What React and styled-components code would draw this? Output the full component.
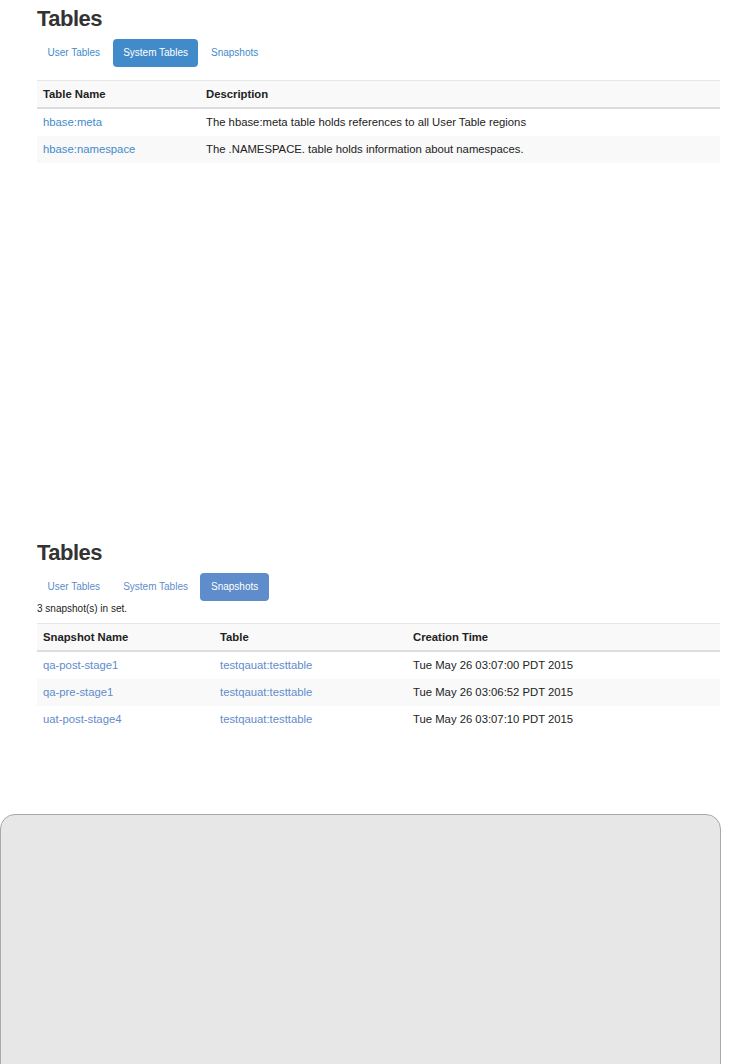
import React from "react";
import styled, { createGlobalStyle } from "styled-components";

const Global = createGlobalStyle`
  html, body { margin: 0; padding: 0; background: #fff; }
  body {
    font-family: "Liberation Sans", Arial, Helvetica, sans-serif;
    color: #333;
    font-size: 11px;
  }
`;

const Page = styled.div`
  display: flex;
  flex-direction: column;
`;

const Section = styled.section`
  padding: 6px 19px 0 37px;
  margin-top: ${(p) => p.$top || 0}px;
`;

const Heading = styled.h1`
  margin: 0;
  font-size: 22px;
  line-height: 26px;
  font-weight: bold;
  letter-spacing: -0.5px;
  color: #333;
`;

const Tabs = styled.ul`
  list-style: none;
  margin: 7px 0 0 0;
  padding: 0;
  display: flex;
  gap: 2px;
`;

const Tab = styled.li`
  height: 28px;
  line-height: 28px;
  padding: 0 10.5px;
  border-radius: 4px;
  font-size: 10px;
  color: ${(p) => (p.$active ? "#fff" : p.$accent)};
  background: ${(p) => (p.$active ? p.$accent : "transparent")};
  cursor: pointer;
`;

const Note = styled.div`
  font-size: 10px;
  line-height: 16px;
  color: #222;
`;

const Table = styled.table`
  width: 100%;
  border-collapse: collapse;
  margin-top: ${(p) => p.$gap}px;
  border-top: 1px solid #e6e6e6;
  table-layout: fixed;
`;

const Th = styled.th`
  text-align: left;
  font-weight: bold;
  font-size: 11.3px;
  line-height: 14px;
  padding: 6px 6px;
  background: #f9f9f9;
  border-bottom: 2px solid #dddddd;
  color: #222;
  width: ${(p) => (p.$w ? `${p.$w}px` : "auto")};
`;

const Tr = styled.tr`
  background: ${(p) => (p.$odd ? "#f9f9f9" : "#fff")};
  & + & > td { border-top: 1px solid #dddddd; }
`;

const Td = styled.td`
  font-size: 11.3px;
  line-height: 15px;
  padding: 6px 6px;
  color: #222;
`;

const Link = styled.a`
  color: ${(p) => p.$accent};
  text-decoration: none;
`;

const Frame = styled.div`
  margin-top: 81px;
  margin-right: 18px;
  height: 270px;
  background: #e7e7e7;
  border: 1px solid #a9a9a9;
  border-radius: 15px;
`;

function TabBar({ active, accent }) {
  const tabs = ["User Tables", "System Tables", "Snapshots"];
  return (
    <Tabs>
      {tabs.map((t) => (
        <Tab key={t} $active={t === active} $accent={accent}>
          {t}
        </Tab>
      ))}
    </Tabs>
  );
}

const systemRows = [
  ["hbase:meta", "The hbase:meta table holds references to all User Table regions"],
  ["hbase:namespace", "The .NAMESPACE. table holds information about namespaces."],
];

const snapshots = [
  ["qa-post-stage1", "testqauat:testtable", "Tue May 26 03:07:00 PDT 2015"],
  ["qa-pre-stage1", "testqauat:testtable", "Tue May 26 03:06:52 PDT 2015"],
  ["uat-post-stage4", "testqauat:testtable", "Tue May 26 03:07:10 PDT 2015"],
];

export default function App() {
  const a1 = "#428bca";
  const a2 = "#5f8ccb";
  return (
    <Page>
      <Global />
      <Section>
        <Heading>Tables</Heading>
        <TabBar active="System Tables" accent={a1} />
        <Table $gap={13}>
          <thead>
            <tr>
              <Th $w={151}>Table Name</Th>
              <Th>Description</Th>
            </tr>
          </thead>
          <tbody>
            {systemRows.map((r, i) => (
              <Tr key={r[0]} $odd={i % 2 === 1}>
                <Td>
                  <Link href="#" $accent={a1}>{r[0]}</Link>
                </Td>
                <Td>{r[1]}</Td>
              </Tr>
            ))}
          </tbody>
        </Table>
      </Section>

      <Section $top={371}>
        <Heading>Tables</Heading>
        <TabBar active="Snapshots" accent={a2} />
        <Note>3 snapshot(s) in set.</Note>
        <Table $gap={6}>
          <thead>
            <tr>
              <Th $w={165}>Snapshot Name</Th>
              <Th $w={181}>Table</Th>
              <Th>Creation Time</Th>
            </tr>
          </thead>
          <tbody>
            {snapshots.map((r, i) => (
              <Tr key={r[0]} $odd={i % 2 === 1}>
                <Td>
                  <Link href="#" $accent={a2}>{r[0]}</Link>
                </Td>
                <Td>
                  <Link href="#" $accent={a2}>{r[1]}</Link>
                </Td>
                <Td>{r[2]}</Td>
              </Tr>
            ))}
          </tbody>
        </Table>
      </Section>

      <Frame />
    </Page>
  );
}
